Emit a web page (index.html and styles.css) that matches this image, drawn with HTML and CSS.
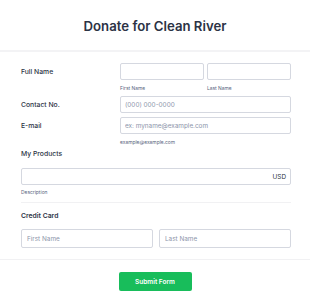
FILE: index.html
```html
<!DOCTYPE html>
<html>
<head>
<meta charset="utf-8">
<link rel="stylesheet" href="styles.css">
</head>
<body>
<div class="header"><h1 class="title">Donate for Clean River</h1></div>
<div class="form">
  <div class="row row-name">
    <label class="label">Full Name</label>
    <div class="pair">
      <input class="input" type="text">
      <input class="input" type="text">
    </div>
  </div>
  <div class="row sub-row">
    <span></span>
    <div class="pair">
      <span class="sublabel">First Name</span>
      <span class="sublabel">Last Name</span>
    </div>
  </div>
  <div class="row row-contact">
    <label class="label">Contact No.</label>
    <input class="input" type="text" placeholder="(000) 000-0000">
  </div>
  <div class="row row-email">
    <label class="label">E-mail</label>
    <input class="input" type="text" placeholder="ex: myname@example.com">
  </div>
  <div class="row hint-row">
    <span></span>
    <span class="sublabel">example@example.com</span>
  </div>
  <div class="label block-label products-label">My Products</div>
  <div class="currency">
    <input class="currency-input" type="text">
    <span class="currency-code">USD</span>
  </div>
  <div class="sublabel description">Description</div>
  <div class="divider"></div>
  <div class="label block-label card-label">Credit Card</div>
  <div class="card-pair">
    <input class="input tall" type="text" placeholder="First Name">
    <input class="input tall" type="text" placeholder="Last Name">
  </div>
</div>
<div class="full-divider"></div>
<div class="actions"><button class="submit" type="button">Submit Form</button></div>
</body>
</html>
```
FILE: styles.css
```css
* { box-sizing: border-box; }
html, body { margin: 0; padding: 0; background: #fff; }
body {
  width: 310px;
  font-family: Inter, "Noto Sans", sans-serif;
  color: #2c3345;
}
.header {
  height: 52px;
  display: flex;
  align-items: center;
  justify-content: center;
  padding-top: 1px;
  border-bottom: 2px solid #f3f3f5;
}
.title {
  margin: 0;
  font-size: 13.2px;
  font-weight: 600;
  color: #2c3345;
}
.form { padding: 11px 19px 0 21px; }
.row {
  display: grid;
  grid-template-columns: 99px 1fr;
  align-items: center;
}
.pair {
  display: grid;
  grid-template-columns: 1fr 1fr;
  gap: 3px;
}
.label {
  font-size: 6.8px;
  font-weight: 500;
  color: #2c3345;
}
.card-label { font-weight: 600; }
.input {
  height: 17px;
  width: 100%;
  border: 1px solid #d5d8e0;
  border-radius: 2px;
  padding: 0 4px;
  font-family: Inter, "Noto Sans", sans-serif;
  font-size: 6.4px;
  color: #2c3345;
  outline: none;
  background: #fff;
}
.input::placeholder { color: #8d95aa; }
.input.tall { height: 19px; padding: 0 5px; }
.sublabel {
  font-size: 4.9px;
  color: #57647e;
}
.sub-row { height: 15px; }
.sub-row .sublabel { padding-top: 1px; }
.row-contact { margin-top: 1px; }
.row-email { margin-top: 4px; }
.hint-row { height: 15px; }
.block-label { line-height: 10px; }
.currency {
  margin-top: 9px;
  height: 17px;
  display: flex;
  align-items: center;
  border: 1px solid #d5d8e0;
  border-radius: 2px;
  padding: 0 4px;
}
.currency-input {
  flex: 1;
  min-width: 0;
  border: 0;
  outline: none;
  height: 100%;
  padding: 0;
  background: transparent;
}
.currency-code {
  font-size: 6.4px;
  color: #2c3345;
}
.description {
  display: block;
  line-height: 14px;
}
.divider {
  margin-top: 3px;
  height: 1px;
  background: #f1f1f3;
}
.card-label { margin-top: 8px; }
.card-pair {
  margin-top: 8px;
  display: grid;
  grid-template-columns: 1fr 1fr;
  gap: 6px;
}
.full-divider {
  margin-top: 11px;
  height: 1px;
  background: #f1f1f3;
}
.actions {
  display: flex;
  justify-content: center;
  padding-top: 12px;
}
.submit {
  width: 73px;
  height: 19px;
  border: 0;
  border-radius: 2px;
  background: #18bd5b;
  color: #fff;
  font-family: Inter, "Noto Sans", sans-serif;
  font-size: 6.5px;
  font-weight: 600;
  padding: 0;
}
```
